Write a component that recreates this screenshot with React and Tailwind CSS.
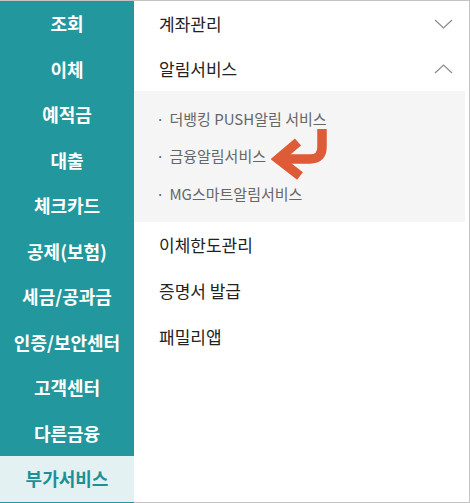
const font = { fontFamily: '"Noto Sans CJK KR", "Noto Sans", sans-serif' }

const sideMenu = [
  '조회', '이체', '예적금', '대출', '체크카드', '공제(보험)',
  '세금/공과금', '인증/보안센터', '고객센터', '다른금융', '부가서비스',
]

const subItems = ['더뱅킹 PUSH알림 서비스', '금융알림서비스', 'MG스마트알림서비스']

function Chevron({ up }) {
  return (
    <svg width="19" height="10" viewBox="0 0 19 10">
      <polyline
        points={up ? '1,9 9.5,1 18,9' : '1,1 9.5,9 18,1'}
        fill="none"
        stroke="#8c8c8c"
        strokeWidth="1.2"
      />
    </svg>
  )
}

function CurvedArrow() {
  return (
    <svg width="64" height="54" viewBox="0 0 64 54" className="absolute left-[271px] top-[125px]">
      <path d="M51 3 V21 Q51 33 39 33 H14" fill="none" stroke="#dd5b36" strokeWidth="9.5" />
      <path d="M27 16 L7 33 L29 50" fill="none" stroke="#dd5b36" strokeWidth="9.5" strokeLinejoin="miter" />
    </svg>
  )
}

export default function App() {
  return (
    <div style={font} className="relative flex w-[470px] h-[503px] bg-white border-t border-r border-[#c4c4c4] overflow-hidden">
      {/* left menu */}
      <div className="w-[134px] h-full bg-[#22979d] flex flex-col shrink-0">
        {sideMenu.map((m, i) => (
          <div
            key={m}
            className={`h-[45.5px] flex items-center justify-center text-[18px] font-bold ${
              i === sideMenu.length - 1 ? 'bg-[#e4f1f3] text-[#1d8f96]' : 'text-white'
            }`}
          >
            {m}
          </div>
        ))}
      </div>

      {/* right panel */}
      <div className="flex-1 h-full border-b border-[#c4c4c4] text-[#222]">
        <div className="h-[45px] flex items-center justify-between pl-[25px] pr-[16px] text-[17px]">
          <span>계좌관리</span>
          <Chevron />
        </div>
        <div className="h-[45px] flex items-center justify-between pl-[25px] pr-[16px] text-[17px]">
          <span>알림서비스</span>
          <Chevron up />
        </div>
        <div className="bg-[#f5f5f5] mr-[4px] py-[9px]">
          {subItems.map((s) => (
            <div key={s} className="h-[37.5px] flex items-center pl-[22px] text-[15px] text-[#666]">
              <span className="mr-[5px]">·</span>
              {s}
            </div>
          ))}
        </div>
        {['이체한도관리', '증명서 발급', '패밀리앱'].map((t) => (
          <div key={t} className="h-[46px] flex items-center pl-[25px] text-[17px]">
            {t}
          </div>
        ))}
      </div>

      <CurvedArrow />
    </div>
  )
}
